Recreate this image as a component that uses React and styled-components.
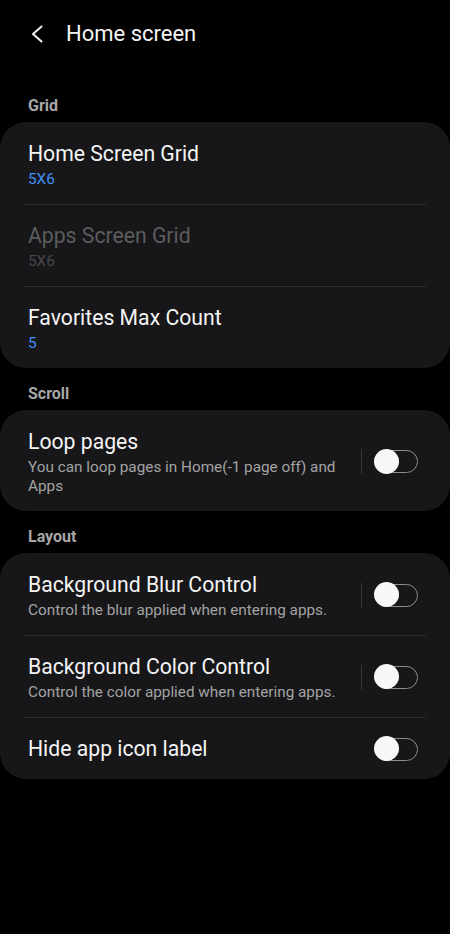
import React from "react";
import styled, { createGlobalStyle } from "styled-components";

const GlobalStyle = createGlobalStyle`
  html, body {
    margin: 0;
    padding: 0;
    background: #000000;
  }
  body {
    font-family: Roboto, "Noto Sans", sans-serif;
    color: #f2f2f2;
    -webkit-font-smoothing: antialiased;
  }
`;

const Page = styled.div`
  width: 450px;
  min-height: 934px;
  background: #000000;
`;

const Header = styled.header`
  display: flex;
  align-items: flex-start;
  height: 80px;
  box-sizing: border-box;
  padding: 21px 0 0 31px;
`;

const BackButton = styled.button`
  display: flex;
  align-items: center;
  height: 26px;
  padding: 0;
  margin: 0 23px 0 0;
  border: none;
  background: none;
  cursor: pointer;
`;

const Title = styled.h1`
  margin: 0;
  font-size: 22px;
  line-height: 26px;
  font-weight: 400;
  color: #f4f4f4;
`;

const SectionLabel = styled.h2`
  margin: 0;
  padding: 16px 28px 6px;
  font-size: 16px;
  line-height: 20px;
  font-weight: 700;
  color: #a6a6a6;
`;

const Card = styled.section`
  background: #171719;
  border-radius: 26px;
`;

const Row = styled.div`
  display: flex;
  align-items: center;
  margin: 0 24px;
  padding: 18px 8px 17px 4px;
  border-top: 1px solid ${(p) => (p.$first ? "transparent" : "#2c2c2e")};
`;

const Texts = styled.div`
  flex: 1;
  min-width: 0;
  padding-right: 16px;
`;

const RowTitle = styled.div`
  font-size: 21.2px;
  line-height: 26px;
  color: ${(p) => (p.$disabled ? "#5c5c5e" : "#f4f4f4")};
`;

const RowSub = styled.div`
  margin: 3px 0 -2px;
  font-size: 15.3px;
  line-height: 19px;
  color: ${(p) =>
    p.$disabled ? "#48484a" : p.$accent ? "#3f8ef5" : "#a3a3a3"};
`;

const Separator = styled.span`
  width: 1px;
  height: 25px;
  background: #38383a;
  margin-right: 13px;
`;

const Track = styled.span`
  position: relative;
  display: block;
  width: 43px;
  height: 23px;
  box-sizing: border-box;
  border: 1.5px solid #8e8e90;
  border-radius: 12px;
  flex-shrink: 0;
  margin-left: ${(p) => (p.$alone ? "14px" : "0")};
`;

const Knob = styled.span`
  position: absolute;
  left: -2px;
  top: -2.5px;
  width: 25px;
  height: 25px;
  border-radius: 50%;
  background: #f8f8f8;
`;

const Chevron = () => (
  <svg width="12" height="18" viewBox="0 0 12 18" fill="none">
    <path
      d="M10.5 1.5 L2 9 L10.5 16.5"
      stroke="#f4f4f4"
      strokeWidth="2"
      strokeLinecap="round"
      strokeLinejoin="round"
    />
  </svg>
);

const Toggle = ({ separated }) => (
  <>
    {separated && <Separator />}
    <Track $alone={!separated}>
      <Knob />
    </Track>
  </>
);

const Setting = ({ title, sub, accent, disabled, toggle, separated, first }) => (
  <Row $first={first}>
    <Texts>
      <RowTitle $disabled={disabled}>{title}</RowTitle>
      {sub && (
        <RowSub $accent={accent} $disabled={disabled}>
          {sub}
        </RowSub>
      )}
    </Texts>
    {toggle && <Toggle separated={separated} />}
  </Row>
);

export default function App() {
  return (
    <Page>
      <GlobalStyle />
      <Header>
        <BackButton aria-label="Back">
          <Chevron />
        </BackButton>
        <Title>Home screen</Title>
      </Header>

      <SectionLabel>Grid</SectionLabel>
      <Card>
        <Setting first title="Home Screen Grid" sub="5X6" accent />
        <Setting title="Apps Screen Grid" sub="5X6" disabled />
        <Setting title="Favorites Max Count" sub="5" accent />
      </Card>

      <SectionLabel>Scroll</SectionLabel>
      <Card>
        <Setting
          first
          title="Loop pages"
          sub="You can loop pages in Home(-1 page off) and Apps"
          toggle
          separated
        />
      </Card>

      <SectionLabel>Layout</SectionLabel>
      <Card>
        <Setting
          first
          title="Background Blur Control"
          sub="Control the blur applied when entering apps."
          toggle
          separated
        />
        <Setting
          title="Background Color Control"
          sub="Control the color applied when entering apps."
          toggle
          separated
        />
        <Setting title="Hide app icon label" toggle />
      </Card>
    </Page>
  );
}
